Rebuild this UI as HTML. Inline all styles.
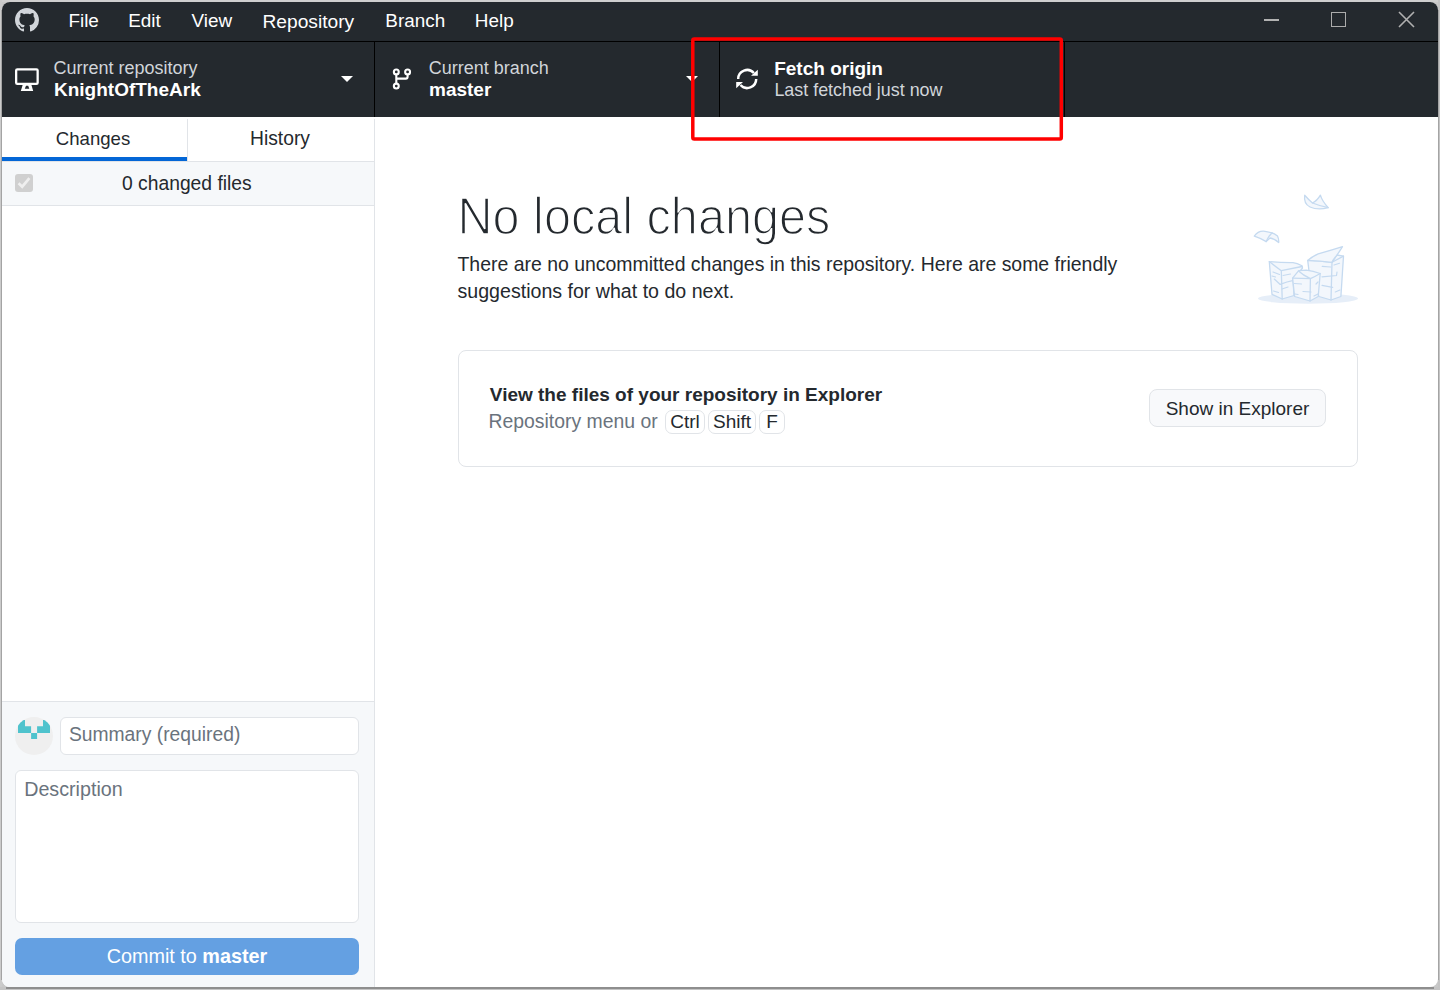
<!DOCTYPE html>
<html><head><meta charset="utf-8">
<style>
*{box-sizing:border-box;margin:0;padding:0}
html,body{width:1440px;height:990px;overflow:hidden;background:#c8c8c8;font-family:"Liberation Sans",sans-serif;position:relative}
.a{position:absolute}
.t{position:absolute;line-height:1;white-space:nowrap}
#win{position:absolute;left:0;top:0;width:1440px;height:990px;background:#fff;clip-path:inset(2px 2px 3px 2px round 8px)}
</style></head>
<body>
<div class="a" style="left:0;top:0;width:1440px;height:2px;background:#cfcfcf"></div>
<div class="a" style="left:0;top:987px;width:1440px;height:3px;background:#c4c4c4"></div>
<div class="a" style="left:6px;top:987.3px;width:1428px;height:1.5px;background:#8e8e8e"></div>
<div id="win">
<div class="a" style="left:0;top:0;width:1440px;height:41px;background:#24292e"></div>
<div class="a" style="left:0;top:41px;width:1440px;height:1px;background:#000"></div>
<div class="a" style="left:0;top:42px;width:1440px;height:75px;background:#24292e"></div>
<svg class="a" style="left:15px;top:8px" width="24" height="24" viewBox="0 0 16 16"><path fill="#d1d5da" d="M8 0C3.58 0 0 3.58 0 8c0 3.54 2.29 6.53 5.47 7.59.4.07.55-.17.55-.38 0-.19-.01-.82-.01-1.49-2.01.37-2.53-.49-2.69-.94-.09-.23-.48-.94-.82-1.13-.28-.15-.68-.52-.01-.53.63-.01 1.08.58 1.23.82.72 1.21 1.87.87 2.33.66.07-.52.28-.87.51-1.07-1.78-.2-3.64-.89-3.64-3.95 0-.87.31-1.59.82-2.15-.08-.2-.36-1.02.08-2.12 0 0 .67-.21 2.2.82.64-.18 1.32-.27 2-.27.68 0 1.36.09 2 .27 1.53-1.04 2.2-.82 2.2-.82.44 1.1.16 1.92.08 2.12.51.56.82 1.27.82 2.15 0 3.07-1.87 3.75-3.65 3.95.29.25.54.73.54 1.48 0 1.07-.01 1.93-.01 2.2 0 .21.15.46.55.38A8.013 8.013 0 0016 8c0-4.42-3.58-8-8-8z"/></svg>
<div class="t" style="left:68.40px;top:11.90px;font-size:18.9px;color:#ffffff;">File</div>
<div class="t" style="left:128.20px;top:11.90px;font-size:18.9px;color:#ffffff;">Edit</div>
<div class="t" style="left:191.50px;top:11.90px;font-size:18.9px;color:#ffffff;">View</div>
<div class="t" style="left:262.50px;top:11.64px;font-size:19.2px;color:#ffffff;">Repository</div>
<div class="t" style="left:385.30px;top:11.90px;font-size:18.9px;color:#ffffff;">Branch</div>
<div class="t" style="left:474.80px;top:11.90px;font-size:18.9px;color:#ffffff;">Help</div>
<div class="a" style="left:1264px;top:19.1px;width:15px;height:1.9px;background:#b2b2b2"></div>
<div class="a" style="left:1331px;top:12px;width:15px;height:15px;border:1.8px solid #acacac"></div>
<svg class="a" style="left:1398px;top:11px" width="17" height="17" viewBox="0 0 17 17"><path d="M1 1L16 16M16 1L1 16" stroke="#b0b0b0" stroke-width="1.6"/></svg>
<div class="a" style="left:374px;top:42px;width:1px;height:75px;background:#000"></div>
<div class="a" style="left:719px;top:42px;width:1px;height:75px;background:#000"></div>
<div class="a" style="left:1064px;top:42px;width:1px;height:75px;background:#000"></div>
<svg class="a" style="left:0;top:0" width="60" height="100" viewBox="0 0 60 100"><rect x="16.15" y="69.35" width="21.5" height="14.5" rx="1.2" fill="none" stroke="#fff" stroke-width="2.3"/><path fill-rule="evenodd" fill="#fff" d="M22.8 84.5H31.3L33.2 91H20.8Z M26 85.8H28.2L29.3 88.7H24.8Z"/></svg>
<div class="t" style="left:53.40px;top:58.66px;font-size:18px;color:#d1d5da;">Current repository</div>
<div class="t" style="left:54.00px;top:80.01px;font-size:19px;color:#ffffff;font-weight:bold;">KnightOfTheArk</div>
<svg class="a" style="left:341px;top:76px" width="12" height="6" viewBox="0 0 12 6"><path d="M0 0H12L6 6Z" fill="#fff"/></svg>
<svg class="a" style="left:392px;top:68px" width="20" height="22" viewBox="0 0 20 22"><g fill="none" stroke="#fff" stroke-width="2.1"><circle cx="4.3" cy="3.9" r="2.45"/><circle cx="15.6" cy="3.9" r="2.45"/><circle cx="4.3" cy="18.1" r="2.45"/><path d="M4.3 6.3V15.6"/><path d="M15.6 6.3V8.8Q15.6 10.6 13.8 10.6H4.3"/></g></svg>
<div class="t" style="left:428.80px;top:58.76px;font-size:18px;color:#d1d5da;">Current branch</div>
<div class="t" style="left:429.00px;top:79.91px;font-size:19px;color:#ffffff;font-weight:bold;">master</div>
<svg class="a" style="left:686px;top:76px" width="12" height="6" viewBox="0 0 12 6"><path d="M0 0H12L6 6Z" fill="#fff"/></svg>
<svg class="a" style="left:0;top:0" width="800" height="100" viewBox="0 0 800 100"><g fill="none" stroke="#fff" stroke-width="2.5"><path d="M738.20 79.00A9.0 9.0 0 0 1 753.89 72.98"/><path d="M756.20 79.00A9.0 9.0 0 0 1 740.51 85.02"/></g><path d="M757.8 69.8V75.8H751Z" fill="#fff"/><path d="M736.2 82H743L736.2 88.3Z" fill="#fff"/></svg>
<div class="t" style="left:774.20px;top:58.91px;font-size:19px;color:#ffffff;font-weight:bold;">Fetch origin</div>
<div class="t" style="left:774.40px;top:81.54px;font-size:17.9px;color:#d1d5da;">Last fetched just now</div>
<div class="a" style="left:374px;top:119px;width:1px;height:868px;background:#e1e4e8"></div>
<div class="a" style="left:187px;top:119px;width:1px;height:42px;background:#e1e4e8"></div>
<div class="a" style="left:2px;top:157px;width:185px;height:4px;background:#0366d6"></div>
<div class="a" style="left:2px;top:161px;width:372px;height:1px;background:#e1e4e8"></div>
<div class="t" style="left:55.80px;top:130.05px;font-size:18.6px;color:#24292e;">Changes</div>
<div class="t" style="left:250.00px;top:129.46px;font-size:19.3px;color:#24292e;">History</div>
<div class="a" style="left:2px;top:162px;width:372px;height:43px;background:#f6f8fa"></div>
<div class="a" style="left:2px;top:205px;width:372px;height:1px;background:#e1e4e8"></div>
<div class="a" style="left:15px;top:174px;width:18px;height:18px;border-radius:3px;background:#d0d0d0"></div>
<svg class="a" style="left:15px;top:174px" width="18" height="18" viewBox="0 0 18 18"><path d="M3.6 9.3L7.2 12.7L14.4 4.2" fill="none" stroke="#efefef" stroke-width="2.7"/></svg>
<div class="t" style="left:122.00px;top:173.66px;font-size:19.3px;color:#24292e;">0 changed files</div>
<div class="a" style="left:2px;top:701px;width:372px;height:1px;background:#e1e4e8"></div>
<div class="a" style="left:2px;top:702px;width:372px;height:286px;background:#f6f8fa"></div>
<div class="a" style="left:15px;top:717px;width:38px;height:38px;border-radius:50%;background:#efefef;overflow:hidden"><svg width="38" height="38" viewBox="0 0 38 38"><path d="M3 3H10V9.2H16.1V16H3Z M35 3H28V9.2H22.1V16H35Z M16.1 16H22.1V22H16.1Z" fill="#4fc3cd"/></svg></div>
<div class="a" style="left:60px;top:717px;width:299px;height:38px;border:1px solid #e1e4e8;border-radius:6px;background:#fff"></div>
<div class="t" style="left:68.90px;top:725.36px;font-size:19.3px;color:#6a737d;">Summary (required)</div>
<div class="a" style="left:15px;top:770px;width:344px;height:153px;border:1px solid #e1e4e8;border-radius:6px;background:#fff"></div>
<div class="t" style="left:24.20px;top:780.02px;font-size:19.7px;color:#6a737d;">Description</div>
<div class="a" style="left:15px;top:938px;width:344px;height:37px;border-radius:7px;background:#64a0e2"></div>
<div class="t" style="left:15px;width:344px;text-align:center;top:946.81px;font-size:19.8px;color:#fff">Commit to <b>master</b></div>
<div class="t" style="left:457.50px;top:192.95px;font-size:48.6px;color:#24292e;transform:scaleY(1.06);transform-origin:0 41.1px;-webkit-text-stroke:1.5px #fff;">No local changes</div>
<div class="t" style="left:457.50px;top:255.13px;font-size:19.45px;color:#24292e;">There are no uncommitted changes in this repository. Here are some friendly</div>
<div class="t" style="left:457.50px;top:281.80px;font-size:19.6px;color:#24292e;">suggestions for what to do next.</div>
<svg class="a" style="left:1250px;top:190px" width="120" height="120" viewBox="1250 190 120 120">
<ellipse cx="1308" cy="298.5" rx="50" ry="5.2" fill="#e6eef8"/>
<g fill="#f3f7fc" stroke="#c5daf0" stroke-width="1.3" stroke-linejoin="round" stroke-linecap="round">
<path d="M1269.3 261.6L1272 294.4L1282.2 299L1294 295.5L1293 280L1302.5 268L1302 265.7Q1297 263 1293 262.7Q1281 262.8 1269.3 261.6Z"/>
<path d="M1269.3 261.6Q1276 267 1281.3 270.7Q1292 268.5 1302 266.5M1281.3 270.7L1282.2 299M1274.3 279.1L1280.2 284.4Q1287 281.5 1293.6 280.3" fill="none"/>
<path d="M1307.7 260.4L1309 271L1318.9 296.5L1331 300L1340.9 296.5L1343.5 256.1L1337 255L1332 262.3Q1320 261 1307.7 260.4Z"/>
<path d="M1307.7 260.4Q1313 256 1318.2 253.8Q1332 250 1342.5 246.6Q1338 254 1335 257.5Q1333 260 1332 262.3Q1320 261 1307.7 260.4Z"/>
<path d="M1332 262.3L1331 300M1332 262.3L1343.5 256.1" fill="none"/>
<path d="M1292.6 278.1L1294.6 296.5L1310 301L1318.2 296.5L1320.2 273.5Q1313 271 1306.4 270.2Q1301 270.5 1298.5 270.9Z"/>
<path d="M1292.6 278.1Q1301 278.5 1310.4 278.7Q1316 276 1320.2 273.5M1310.4 278.7L1310 301M1298.5 270.9Q1303 275 1310.4 278.7" fill="none"/>
<path d="M1304.7 195.2Q1303.5 204 1310 207Q1318 210.5 1328.2 207.7Q1322 201 1320.4 195.2Q1317 201 1312.5 203Q1308 199 1304.7 195.2Z"/><path d="M1312.5 203Q1320 206 1328.2 207.7" fill="none"/>
<path d="M1254.3 236.2Q1258 230.5 1265 231.3Q1274 232.5 1277.5 236Q1279 239 1278.7 242.5Q1274 238.5 1270 238L1266.2 241.6Q1260 238 1254.3 236.2Z"/><path d="M1266.2 241.6Q1269 235 1272.5 233" fill="none"/>
</g>
<g stroke="#c5daf0" stroke-width="1.2" fill="none" stroke-linecap="round">
<path d="M1273 272L1279.5 274.5M1272 276L1275.5 277M1283 275.5L1290.5 274M1282 289L1288 287M1273.5 291L1278.5 292.5"/>
<path d="M1294.5 283.5L1301.5 284M1303 291.5L1311 292M1316 284L1318 282M1314 296L1318 294M1295 294L1298 294.5"/>
<path d="M1322.2 266.3L1330.7 267M1334 265L1339.5 263.3M1322 276.8L1336.5 275.5L1337 272M1322 285.3L1332.7 287.3M1335.3 292L1339.9 290"/>
</g>
</svg>
<div class="a" style="left:458px;top:350px;width:900px;height:117px;border:1px solid #e1e4e8;border-radius:8px;background:#fff"></div>
<div class="t" style="left:489.80px;top:384.81px;font-size:19px;color:#24292e;font-weight:bold;">View the files of your repository in Explorer</div>
<div class="t" style="left:488.50px;top:411.97px;font-size:19.4px;color:#6a737d;">Repository menu or</div>
<div class="a" style="left:665px;top:410px;width:40px;height:24px;border:1px solid #e1e4e8;border-radius:7px;background:#fff"></div>
<div class="t" style="left:665px;width:40px;text-align:center;top:411.71px;font-size:19px;color:#24292e">Ctrl</div>
<div class="a" style="left:708px;top:410px;width:48px;height:24px;border:1px solid #e1e4e8;border-radius:7px;background:#fff"></div>
<div class="t" style="left:708px;width:48px;text-align:center;top:411.71px;font-size:19px;color:#24292e">Shift</div>
<div class="a" style="left:759px;top:410px;width:26px;height:24px;border:1px solid #e1e4e8;border-radius:7px;background:#fff"></div>
<div class="t" style="left:759px;width:26px;text-align:center;top:411.71px;font-size:19px;color:#24292e">F</div>
<div class="a" style="left:1149px;top:389px;width:177px;height:38px;border:1px solid #e1e4e8;border-radius:8px;background:#f8f9fb"></div>
<div class="t" style="left:1149px;width:177px;text-align:center;top:398.91px;font-size:19px;color:#24292e">Show in Explorer</div>
</div>
<svg class="a" style="left:0;top:0" width="1440" height="990"><rect x="692.8" y="38.9" width="368.5" height="100" fill="none" stroke="#ff0000" stroke-width="3.5" rx="1.5"/></svg>
<div class="a" style="left:0;top:0;width:2px;height:987px;background:#cbcbcb"></div>
<div class="a" style="left:1.3px;top:10px;width:0.8px;height:970px;background:#a4a4a4"></div>
<div class="a" style="left:1438px;top:0;width:2px;height:987px;background:#c4c4c4"></div>
<div class="a" style="left:1437.9px;top:10px;width:0.8px;height:970px;background:#a4a4a4"></div>
</body></html>
